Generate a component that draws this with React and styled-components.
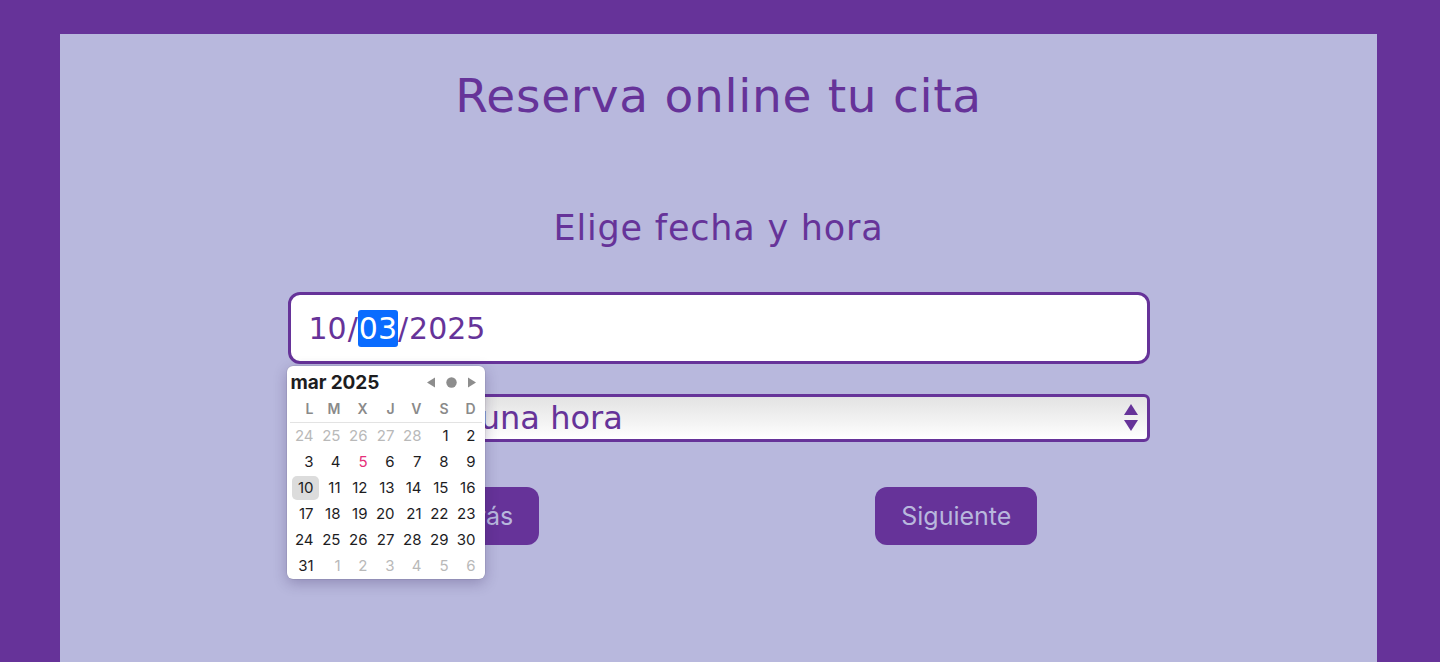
import styled, { createGlobalStyle } from "styled-components";

const GlobalStyle = createGlobalStyle`
  html, body {
    margin: 0;
    padding: 0;
    background: #663399;
  }
  * {
    box-sizing: border-box;
  }
`;

const Page = styled.div`
  min-height: 100vh;
  padding: 34px 63px 0 60px;
`;

const Panel = styled.main`
  display: flex;
  flex-direction: column;
  align-items: center;
  min-height: calc(100vh - 34px);
  padding-top: 34px;
  background-color: #b8b8dd;
  font-family: "DejaVu Sans", "Open Sans", sans-serif;
  color: #663399;
`;

const Title = styled.h1`
  margin: 0;
  font-size: 47px;
  font-weight: 400;
  line-height: 1.2;
  letter-spacing: 0.7px;
`;

const Subtitle = styled.h2`
  margin: 83px 0 0;
  font-size: 35px;
  font-weight: 400;
  line-height: 1.2;
  letter-spacing: 0.8px;
`;

const Form = styled.div`
  display: flex;
  flex-direction: column;
  width: 862px;
  margin-top: 43px;
`;

const DateWrap = styled.div`
  position: relative;
`;

const DateField = styled.div`
  display: flex;
  align-items: center;
  height: 72px;
  padding: 0 17px;
  background: #fff;
  border: 3px solid #663399;
  border-radius: 12px;
  font-size: 30px;
`;

const Segment = styled.span`
  padding: 1px 1px;
  border-radius: 3px;
  background: ${(p) => (p.$active ? "#0a6cff" : "transparent")};
  color: ${(p) => (p.$active ? "#fff" : "inherit")};
`;

const Popover = styled.div`
  position: absolute;
  top: calc(100% + 2px);
  left: -1px;
  z-index: 5;
  width: 198px;
  padding: 2px 4px 0;
  background: #fff;
  border-radius: 6px;
  box-shadow: 0 4px 14px rgba(40, 20, 80, 0.28), 0 0 0 0.5px rgba(0, 0, 0, 0.12);
  font-family: Inter, "Liberation Sans", sans-serif;
  color: #1d1d1f;
`;

const CalHeader = styled.div`
  display: flex;
  align-items: center;
  justify-content: space-between;
  height: 28px;
  padding: 0 4px 0 0;
`;

const MonthLabel = styled.div`
  font-size: 19px;
  font-weight: 700;
  letter-spacing: -0.1px;
`;

const Nav = styled.div`
  display: flex;
  align-items: center;
  gap: 10px;
  color: #8d8d8d;
`;

const Grid = styled.div`
  display: grid;
  grid-template-columns: repeat(7, 27px);
  margin-left: 1px;
`;

const WeekDay = styled.div`
  height: 26px;
  padding-right: 5px;
  line-height: 26px;
  text-align: right;
  font-size: 14px;
  font-weight: 600;
  color: #8a8a8a;
`;

const Divider = styled.div`
  grid-column: 1 / -1;
  height: 1px;
  margin: 0 -1px 0 -2px;
  background: #e3e3e3;
`;

const Day = styled.div`
  height: 24px;
  margin: 1px 0;
  padding-right: 5px;
  line-height: 24px;
  text-align: right;
  font-size: 15px;
  border-radius: 5px;
  background: ${(p) => (p.$selected ? "#dcdcdc" : "transparent")};
  color: ${(p) => (p.$today ? "#e5307a" : p.$muted ? "#b9b9b9" : "#1d1d1f")};
`;

const SelectBox = styled.div`
  display: flex;
  align-items: center;
  justify-content: space-between;
  height: 48px;
  margin-top: 30px;
  padding: 0 8px 0 7px;
  border: 3px solid #663399;
  border-radius: 6px;
  background: linear-gradient(#e3e3e3, #f3f3f3 60%, #ffffff);
  font-size: 32px;
`;

const Buttons = styled.div`
  display: flex;
  justify-content: center;
  gap: 336px;
  margin-top: 45px;
  padding-left: 26px;
`;

const Button = styled.button`
  height: 58px;
  padding: 0 26px;
  border: none;
  border-radius: 12px;
  background: #663399;
  color: #b8b8dd;
  font-family: Inter, "Liberation Sans", sans-serif;
  font-size: 25px;
  cursor: pointer;
`;

const weekDays = ["L", "M", "X", "J", "V", "S", "D"];

const buildDays = () => {
  const days = [];
  [24, 25, 26, 27, 28].forEach((d) => days.push({ d, muted: true }));
  for (let d = 1; d <= 31; d++) days.push({ d });
  for (let d = 1; d <= 6; d++) days.push({ d, muted: true });
  return days;
};

const Calendar = () => (
  <Popover>
    <CalHeader>
      <MonthLabel>mar 2025</MonthLabel>
      <Nav>
        <svg width="10" height="11" viewBox="0 0 10 11">
          <path d="M9 0.5 L1 5.5 L9 10.5 Z" fill="currentColor" />
        </svg>
        <svg width="11" height="11" viewBox="0 0 11 11">
          <circle cx="5.5" cy="5.5" r="5.2" fill="currentColor" />
        </svg>
        <svg width="10" height="11" viewBox="0 0 10 11">
          <path d="M1 0.5 L9 5.5 L1 10.5 Z" fill="currentColor" />
        </svg>
      </Nav>
    </CalHeader>
    <Grid>
      {weekDays.map((w) => (
        <WeekDay key={w}>{w}</WeekDay>
      ))}
      <Divider />
      {buildDays().map((day, i) => (
        <Day
          key={i}
          $muted={day.muted}
          $today={!day.muted && day.d === 5}
          $selected={!day.muted && day.d === 10}
        >
          {day.d}
        </Day>
      ))}
    </Grid>
  </Popover>
);

export default function App() {
  return (
    <>
      <GlobalStyle />
      <Page>
        <Panel>
          <Title>Reserva online tu cita</Title>
          <Subtitle>Elige fecha y hora</Subtitle>
          <Form>
            <DateWrap>
              <DateField>
                <Segment>10</Segment>/<Segment $active>03</Segment>/
                <Segment>2025</Segment>
              </DateField>
              <Calendar />
            </DateWrap>
            <SelectBox>
              <span>Selecciona una hora</span>
              <svg width="16" height="30" viewBox="0 0 16 30">
                <path d="M8 1 L15 12 L1 12 Z" fill="#663399" />
                <path d="M1 17 L15 17 L8 28 Z" fill="#663399" />
              </svg>
            </SelectBox>
            <Buttons>
              <Button>Atrás</Button>
              <Button>Siguiente</Button>
            </Buttons>
          </Form>
        </Panel>
      </Page>
    </>
  );
}
